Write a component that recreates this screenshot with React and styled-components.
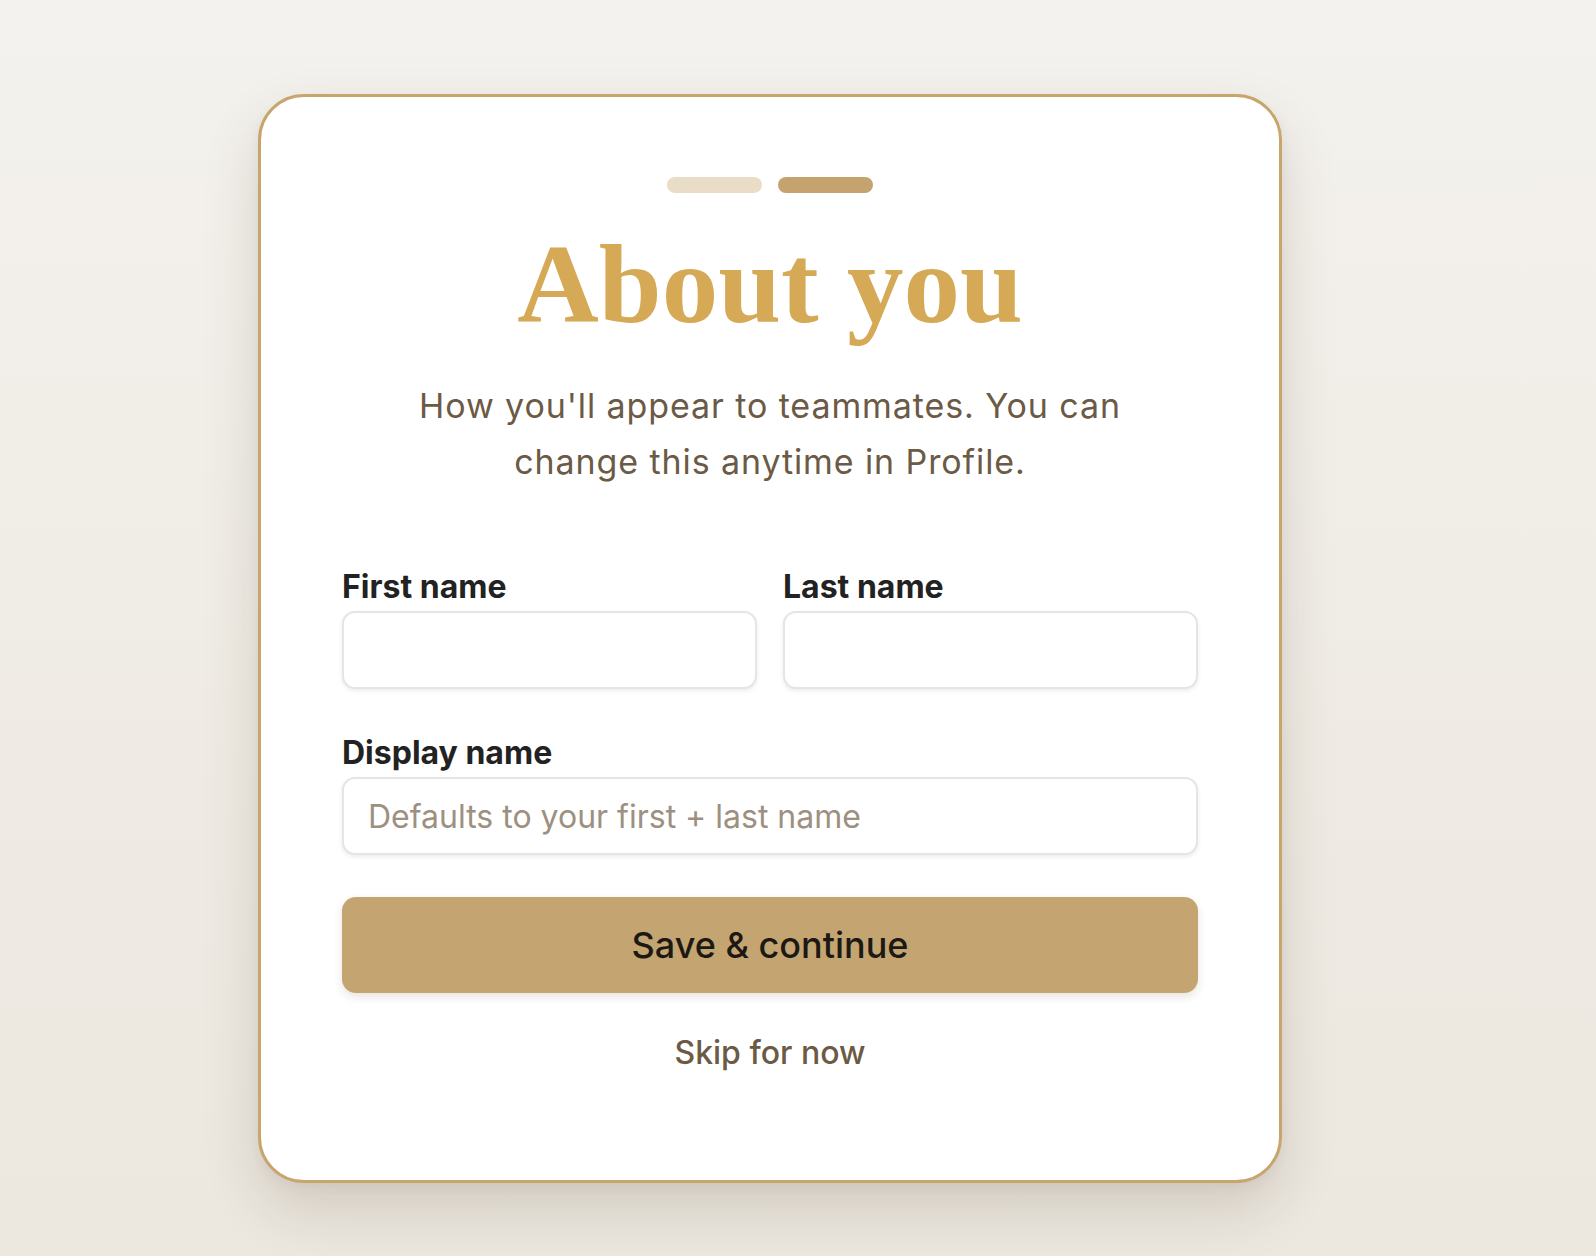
import React from "react";
import styled, { createGlobalStyle } from "styled-components";

const GlobalStyle = createGlobalStyle`
  * { box-sizing: border-box; }
  html, body {
    margin: 0;
    padding: 0;
  }
  body {
    min-height: 1256px;
    background: linear-gradient(180deg, #f4f2ee 0%, #efebe4 60%, #ece7df 100%);
    font-family: Inter, "Noto Sans", sans-serif;
    -webkit-font-smoothing: antialiased;
  }
`;

function App() {
  return (
    <>
      <GlobalStyle />
      <Page>
        <Card>
          <Steps>
            {STEPS.map((done, idx) => (
              <Step key={idx} $active={done} />
            ))}
          </Steps>
          <Title>About you</Title>
          <Subtitle>
            How you'll appear to teammates. You can change this anytime in
            Profile.
          </Subtitle>

          <Form onSubmit={(e) => e.preventDefault()}>
            <Row>
              <Field>
                <Label htmlFor="first">First name</Label>
                <Input id="first" type="text" />
              </Field>
              <Field>
                <Label htmlFor="last">Last name</Label>
                <Input id="last" type="text" />
              </Field>
            </Row>
            <Field>
              <Label htmlFor="display">Display name</Label>
              <Input
                id="display"
                type="text"
                placeholder="Defaults to your first + last name"
              />
            </Field>
            <PrimaryButton type="submit">Save &amp; continue</PrimaryButton>
          </Form>

          <SkipButton type="button">Skip for now</SkipButton>
        </Card>
      </Page>
    </>
  );
}

export default App;

const STEPS = [false, true];

//style
const Page = styled.main`
  display: flex;
  justify-content: center;
  align-items: flex-start;
  padding: 94px 56px 0 0;
`;

const Card = styled.section`
  width: 1024px;
  display: flex;
  flex-direction: column;
  align-items: center;
  padding: 80px 81px 109px;
  background: #ffffff;
  border: 3px solid #c7a56d;
  border-radius: 46px;
  box-shadow: 0 26px 56px rgba(70, 55, 30, 0.16), 0 4px 12px rgba(70, 55, 30, 0.05);
`;

const Steps = styled.div`
  display: flex;
  gap: 16px;
`;

const Step = styled.span`
  width: 95px;
  height: 16px;
  border-radius: 8px;
  background: ${({ $active }) => ($active ? "#c4a36f" : "#e9ddc7")};
`;

const Title = styled.h1`
  margin: 34px 0 0;
  font-family: "Liberation Serif", "DejaVu Serif", serif;
  font-size: 113px;
  font-weight: 700;
  line-height: 1;
  color: #d5a955;
`;

const Subtitle = styled.p`
  margin: 38px 0 0;
  max-width: 760px;
  text-align: center;
  font-size: 34px;
  letter-spacing: 0.9px;
  line-height: 56px;
  color: #6b5a45;
`;

const Form = styled.form`
  width: 100%;
  margin-top: 79px;
  display: flex;
  flex-direction: column;
  gap: 46px;
`;

const Row = styled.div`
  display: grid;
  grid-template-columns: 1fr 1fr;
  gap: 26px;
`;

const Field = styled.div`
  display: flex;
  flex-direction: column;
  gap: 6px;
`;

const Label = styled.label`
  font-size: 32px;
  font-weight: 700;
  line-height: 36px;
  color: #222222;
`;

const Input = styled.input`
  height: 78px;
  width: 100%;
  padding: 0 24px;
  border: 2px solid #e6e5e3;
  border-radius: 13px;
  background: #ffffff;
  box-shadow: 0 2px 4px rgba(0, 0, 0, 0.08);
  font-family: Inter, "Noto Sans", sans-serif;
  font-size: 32px;
  color: #2a241d;
  outline: none;

  &::placeholder {
    color: #9d9080;
  }
`;

const PrimaryButton = styled.button`
  height: 96px;
  margin-top: -4px;
  border: none;
  border-radius: 14px;
  background: #c4a470;
  box-shadow: 0 4px 10px rgba(60, 45, 20, 0.12);
  font-family: Inter, "Noto Sans", sans-serif;
  font-size: 36px;
  font-weight: 500;
  color: #1c1915;
  cursor: pointer;
`;

const SkipButton = styled.button`
  margin-top: 42px;
  padding: 0;
  border: none;
  background: none;
  font-family: Inter, "Noto Sans", sans-serif;
  font-size: 32px;
  font-weight: 500;
  line-height: 36px;
  color: #6b5a45;
  cursor: pointer;
`;
